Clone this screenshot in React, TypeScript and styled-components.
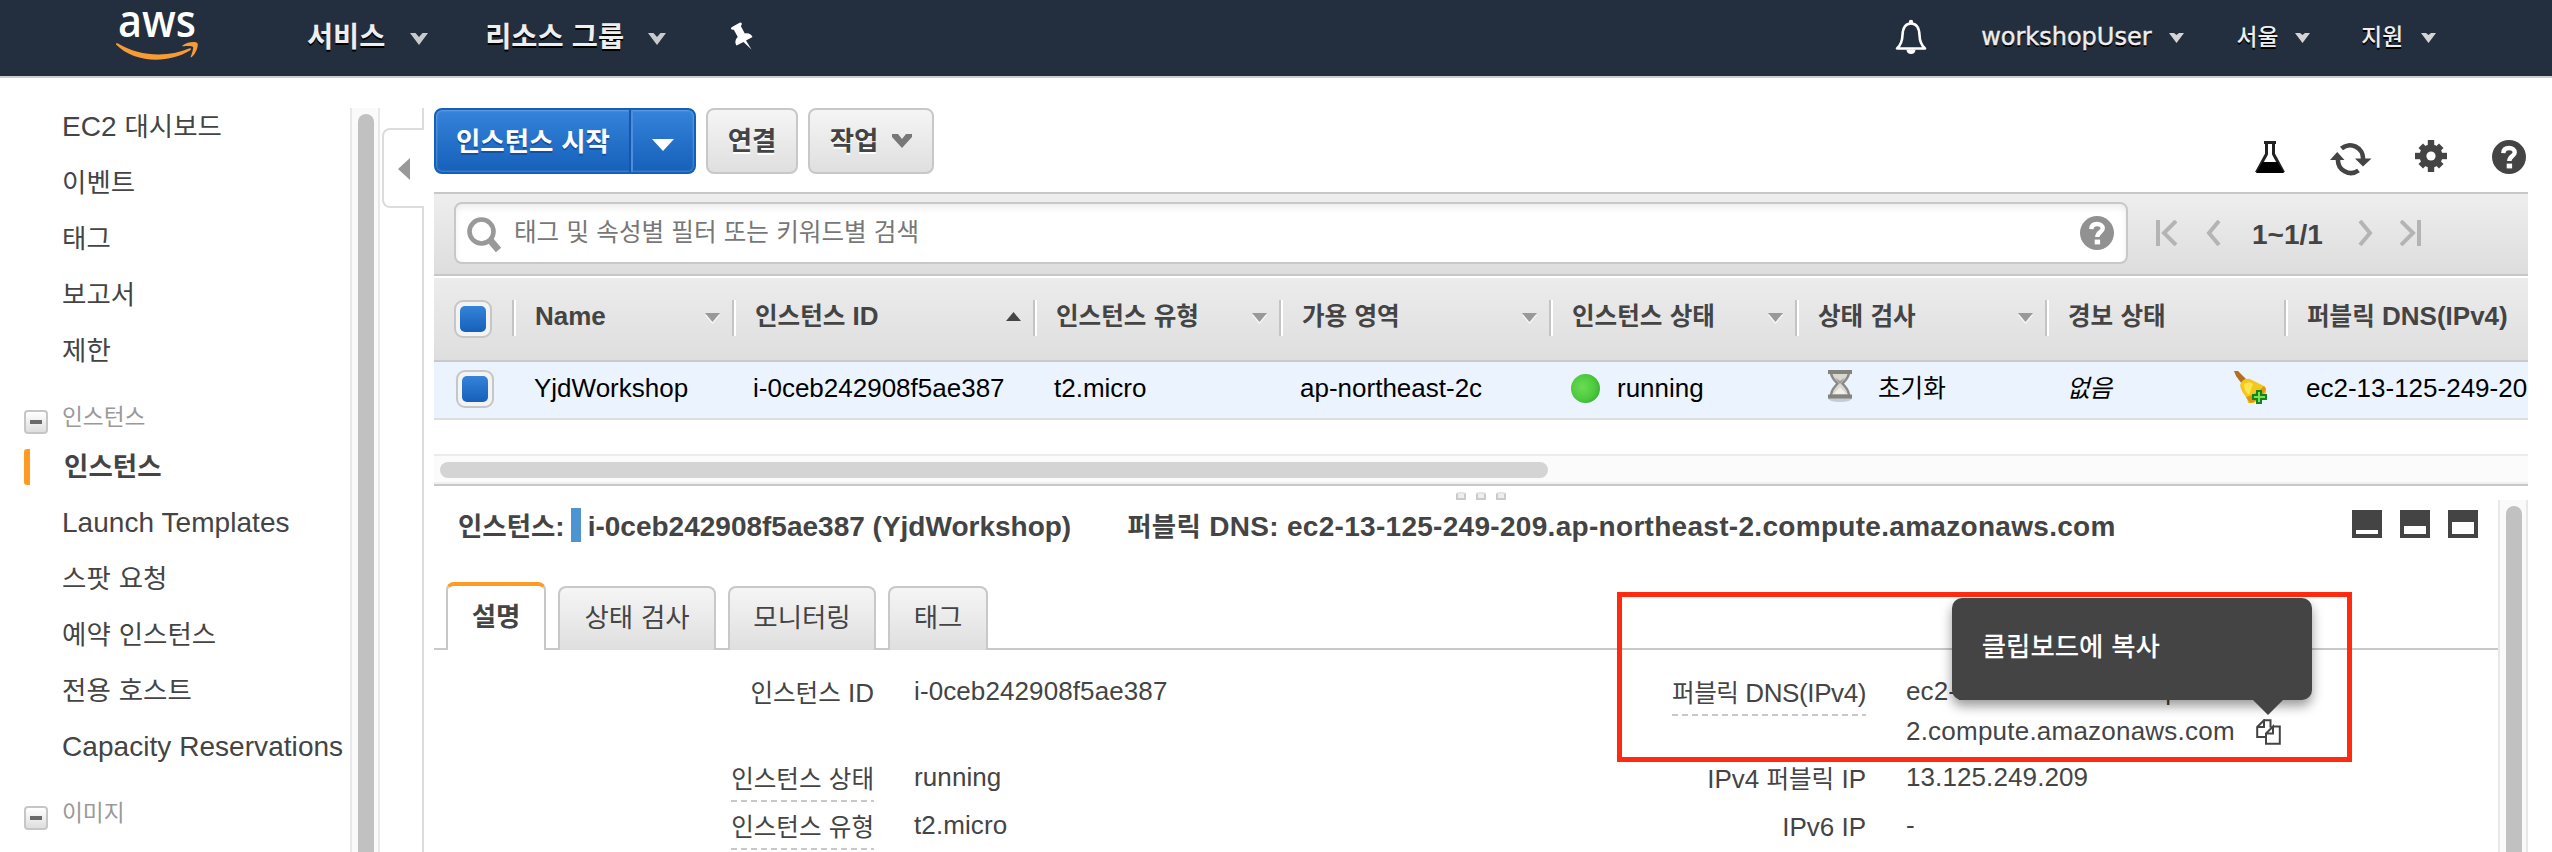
import React from 'react';
import styled, { createGlobalStyle, css } from 'styled-components';

const GlobalStyle = createGlobalStyle`
  *, *::before, *::after { box-sizing: border-box; }
  body {
    margin: 0;
    background: #fff;
    font-family: 'Liberation Sans', 'Noto Sans CJK KR', sans-serif;
    color: #444;
  }
`;

/* Hangul runs are set slightly smaller than the latin text beside them. */
const Hangul = styled.span`
  font-family: 'Noto Sans CJK KR', sans-serif;
  font-size: 0.945em;
  line-height: 0;
`;

const T = ({ children }: { children: string }) => (
  <>
    {children.split(/([\uac00-\ud7a3]+)/).map((part, i) =>
      i % 2 ? <Hangul key={i}>{part}</Hangul> : part
    )}
  </>
);

const Page = styled.div`
  width: 2552px;
  height: 852px;
  overflow: hidden;
  display: flex;
  flex-direction: column;
  background: #fff;
`;

/* ---------- top navigation ---------- */

const TopNav = styled.header`
  flex: none;
  height: 78px;
  display: flex;
  align-items: flex-start;
  background: #232f3e;
  border-bottom: 2px solid #cccdd1;
`;

const Logo = styled.svg`
  flex: none;
  width: 90px;
  height: 74px;
  margin-left: 114px;
  overflow: visible;
`;

const NavItem = styled.div<{ $left: number; $small?: boolean; $gap: number }>`
  display: flex;
  align-items: center;
  gap: ${p => p.$gap}px;
  height: 74px;
  margin-left: ${p => p.$left}px;
  white-space: nowrap;
  color: #eee;
  font-size: ${p => (p.$small ? 24 : 30)}px;
  font-weight: ${p => (p.$small ? 500 : 700)};
  text-shadow: 0 2px 0 #000;
`;

const Latin = styled.span`
  font-family: 'DejaVu Sans', sans-serif;
  font-weight: 400;
  -webkit-text-stroke: 0.4px #eee;
`;

const Icon = styled.svg<{ $left?: number; $top?: number }>`
  flex: none;
  display: block;
  margin-left: ${p => p.$left ?? 0}px;
  margin-top: ${p => p.$top ?? 0}px;
`;

const NavSpacer = styled.div`
  flex: 1;
`;

const NavChevron = ({ small }: { small?: boolean }) => (
  <Icon width={small ? 15 : 18} height={small ? 10 : 12} viewBox="0 0 18 12" $top={small ? 1 : 4}>
    <path
      d={small ? 'M0 0H6L9 2.500L12 0H18L9 12Z' : 'M0 0H5.500L9 4L12.500 0H18L9 12Z'}
      fill={small ? '#d4d4d4' : '#c8cacd'}
    />
  </Icon>
);

/* ---------- sidebar ---------- */

const Body = styled.div`
  flex: 1;
  min-height: 0;
  display: flex;
`;

const Sidebar = styled.nav`
  flex: none;
  width: 350px;
  padding-top: 20px;
  overflow: hidden;
`;

const SideItem = styled.div<{ $active?: boolean }>`
  display: flex;
  align-items: center;
  height: 56px;
  padding-top: 1px;
  padding-left: 62px;
  font-size: 28px;
  letter-spacing: 0.05px;
  white-space: nowrap;
  ${p =>
    p.$active &&
    css`
      padding-left: 24px;
      font-weight: 700;
      &::before {
        content: '';
        width: 6px;
        height: 36px;
        margin-right: 34px;
        border-radius: 3px 0 0 3px;
        background: #ff9a22;
      }
    `}
`;

const SideGroup = styled.div`
  display: flex;
  height: 60px;
  padding-left: 24px;
  color: #999;
  font-size: 24px;
  line-height: 77px;
`;

const Toggle = styled.span`
  display: flex;
  align-items: center;
  justify-content: center;
  width: 24px;
  height: 24px;
  margin: 32px 14px 0 0;
  border: 2px solid #c6c6c6;
  border-radius: 4px;
  background: linear-gradient(#fff, #dedede);
  &::before {
    content: '';
    width: 12px;
    height: 4px;
    background: #6a6a6a;
  }
`;

const VScroll = styled.div<{ $top?: number }>`
  flex: none;
  width: 30px;
  margin-top: ${p => p.$top ?? 0}px;
  padding: 6px 6px 0 6px;
  border: solid #e8e8e8;
  border-width: 0 2px;
  background: #fafafa;
`;

const VThumb = styled.div`
  width: 16px;
  height: 100%;
  border-radius: 8px 8px 0 0;
  background: #c1c1c1;
`;

const Gutter = styled.div`
  flex: none;
  width: 44px;
  margin-top: 30px;
  display: flex;
  flex-direction: column;
`;

const GutterLine = styled.div<{ $height?: number }>`
  ${p => (p.$height ? `height: ${p.$height}px;` : 'flex: 1;')}
  border-right: 2px solid #dcdcdc;
`;

const Handle = styled.div`
  display: flex;
  align-items: center;
  height: 80px;
  margin-left: 2px;
  padding: 2px 0 0 14px;
  border: 2px solid #dcdcdc;
  border-right: 0;
  border-radius: 8px 0 0 8px;
`;

/* ---------- content ---------- */

const Content = styled.main`
  flex: none;
  width: 2094px;
  margin-left: 10px;
  display: flex;
  flex-direction: column;
`;

const Toolbar = styled.div`
  flex: none;
  display: flex;
  align-items: flex-start;
  height: 114px;
  padding-top: 30px;
`;

const Button = styled.button<{ $width: number }>`
  display: flex;
  align-items: center;
  justify-content: center;
  gap: 14px;
  width: ${p => p.$width}px;
  height: 66px;
  margin: 0 10px 0 0;
  padding: 0;
  border: 2px solid #c8c8c8;
  border-radius: 8px;
  background: linear-gradient(#f5f5f5, #dfdfdf);
  color: #444;
  font: 700 28px 'Liberation Sans', sans-serif;
  text-shadow: 0 2px 0 #fff;
`;

const SplitButton = styled.div`
  display: flex;
  width: 262px;
  height: 66px;
  margin-right: 10px;
  border: 2px solid #1360b8;
  border-radius: 8px;
  background: linear-gradient(#3583da, #1660b9);
  box-shadow: inset 0 0 2px 1px rgba(255, 255, 255, 0.25);
  color: #fff;
  font-size: 28px;
  font-weight: 700;
  line-height: 64px;
  text-shadow: 0 2px 0 #1450a0;
`;

const SplitLabel = styled.div`
  width: 195px;
  height: 62px;
  padding-left: 20px;
  border-right: 2px solid #1458ab;
  box-shadow: 2px 0 0 #4a8fdc;
  white-space: nowrap;
`;

const SplitArrow = styled.div`
  flex: 1;
  display: flex;
  align-items: center;
  justify-content: center;
  padding-top: 8px;
`;

const FilterBar = styled.div`
  flex: none;
  display: flex;
  height: 84px;
  padding: 8px 0 0 20px;
  border: solid #c8c8c8;
  border-width: 2px 0;
  background: linear-gradient(#eeeeee, #dddddd);
`;

const SearchBox = styled.div`
  display: flex;
  align-items: center;
  width: 1674px;
  height: 62px;
  padding: 0 12px 0 11px;
  border: 2px solid #c8c8c8;
  border-radius: 8px;
  background: #fff;
  box-shadow: inset 0 4px 6px #eee;
  color: #777;
  font-size: 26px;
`;

const Placeholder = styled.span`
  flex: 1;
  padding: 0 0 1px 11px;
`;

const PageCount = styled.span`
  margin: 18px 0 0 31px;
  width: 106px;
  color: #444;
  font-size: 28px;
  font-weight: 700;
  line-height: 30px;
`;

const columns = '78px 220px 301px 246px 270px 246px 250px 239px 244px';

const HeadRow = styled.div`
  flex: none;
  display: grid;
  grid-template-columns: ${columns};
  height: 84px;
  margin-top: 2px;
  padding-top: 22px;
  border-bottom: 2px solid #c9c9c9;
  background: linear-gradient(#ececec, #dedede);
`;

const HeadCell = styled.div`
  display: flex;
  align-items: center;
  justify-content: space-between;
  height: 36px;
  padding: 0 12px 3px 21px;
  border-left: 2px solid #c4c4c4;
  box-shadow: inset 2px 0 0 #fff;
  font-size: 26px;
  font-weight: 700;
  white-space: nowrap;
`;

const DataRow = styled.div`
  flex: none;
  display: grid;
  grid-template-columns: ${columns};
  height: 58px;
  border-bottom: 2px solid #dcdedf;
  background: #eaf3fe;
  color: #000;
`;

const Cell = styled.div<{ $italic?: boolean; $left?: number }>`
  display: flex;
  overflow: hidden;
  padding-left: ${p => p.$left ?? 21}px;
  font-size: 26px;
  line-height: 53px;
  font-style: ${p => (p.$italic ? 'italic' : 'normal')};
  white-space: nowrap;
`;

const Check = styled.span<{ $row?: boolean }>`
  display: flex;
  align-items: center;
  justify-content: center;
  width: 38px;
  height: 38px;
  margin: ${p => (p.$row ? '8px 0 0 22px' : '0 0 0 20px')};
  border: 2px solid #c6c6c6;
  border-radius: 9px;
  background: #f3f3f3;
  &::before {
    content: '';
    width: 26px;
    height: 26px;
    border-radius: 5px;
    background: linear-gradient(#3583da, #1660b9);
  }
`;

const StatusDot = styled.span`
  width: 29px;
  height: 29px;
  margin: 12px 17px 0 1px;
  border-radius: 50%;
  background: radial-gradient(circle at 40% 45%, #6bdc55 0%, #4ecb3e 50%, #26a32a 100%);
`;

const HScroll = styled.div`
  flex: none;
  height: 32px;
  margin-top: 34px;
  padding: 6px 0 0 6px;
  border: solid;
  border-width: 2px 0;
  border-color: #ececec transparent #c8c8c8;
  background: #fbfbfb;
  box-shadow: inset 0 -2px 0 #f0f0f0;
`;

const HThumb = styled.div`
  width: 1108px;
  height: 16px;
  border-radius: 8px;
  background: #d4d4d4;
`;

/* ---------- details pane ---------- */

const Splitter = styled.div`
  flex: none;
  display: flex;
  justify-content: center;
  gap: 10px;
  height: 14px;
  padding-top: 6px;
`;

const Dot = styled.i`
  width: 10px;
  height: 8px;
  border: 2px solid #cacaca;
  border-top-color: #e4e4e4;
  border-radius: 3px 3px 1px 1px;
  background: #eee;
`;

const Pane = styled.section`
  flex: 1;
  min-height: 0;
  display: flex;
`;

const Details = styled.div`
  position: relative;
  flex: 1;
`;

const TitleRow = styled.div`
  display: flex;
  height: 82px;
  padding-left: 24px;
  font-size: 28px;
  font-weight: 700;
  line-height: 53px;
  white-space: nowrap;
`;

const ColorBar = styled.span`
  width: 10px;
  height: 34px;
  margin: 8px 7px 0 6px;
  background: #4f94d2;
`;

const TitleDns = styled.span`
  margin-left: 56px;
  letter-spacing: 0.3px;
`;

const WindowIcons = styled.div`
  display: flex;
  gap: 18px;
  margin: 10px 20px 0 auto;
`;

const WindowIcon = styled.span<{ $open: number }>`
  display: flex;
  align-items: flex-end;
  width: 30px;
  height: 28px;
  padding: 4px;
  background: #444;
  &::before {
    content: '';
    flex: 1;
    height: ${p => p.$open}px;
    background: #fff;
  }
`;

const Tabs = styled.div`
  display: flex;
  align-items: flex-end;
  gap: 12px;
  height: 68px;
  padding-left: 12px;
  box-shadow: inset 0 -2px 0 #c8c8c8;
`;

const Tab = styled.div<{ $width: number; $active?: boolean }>`
  width: ${p => p.$width}px;
  height: 64px;
  border: 2px solid #c8c8c8;
  border-bottom: 0;
  border-radius: 8px 8px 0 0;
  background: linear-gradient(#f5f5f5, #dfdfdf);
  font-size: 28px;
  line-height: 60px;
  text-align: center;
  white-space: nowrap;
  ${p =>
    p.$active &&
    css`
      height: 68px;
      border-top: 4px solid #ff9a22;
      background: #fff;
      font-weight: 700;
      line-height: 62px;
    `}
`;

const Fields = styled.div`
  display: grid;
  grid-template-columns: 440px 400px 512px 460px;
  grid-template-rows: 86px 48px 48px;
  column-gap: 40px;
  padding-top: 21px;
  font-size: 26px;
  line-height: 40px;
  white-space: nowrap;
`;

const Label = styled.div<{ $dashed?: boolean; $tight?: boolean }>`
  justify-self: end;
  align-self: start;
  margin-top: 2px;
  padding-bottom: 1px;
  letter-spacing: ${p => (p.$tight ? '-0.4px' : '0')};
  ${p =>
    p.$dashed &&
    css`
      padding-bottom: 3px;
      background: repeating-linear-gradient(90deg, #c8c8c8 0 6px, transparent 6px 10px) bottom / 100% 2px
        no-repeat;
    `}
`;

const Value = styled.div`
  letter-spacing: 0.1px;
`;

const HostTail = styled.span`
  letter-spacing: 0.22px;
`;

const CopyAnchor = styled.span`
  position: relative;
  display: inline-block;
  margin-left: 21px;
  vertical-align: -5px;
  line-height: 0;
`;

const Tooltip = styled.div`
  position: absolute;
  right: -31px;
  bottom: 45px;
  width: 360px;
  height: 102px;
  padding-left: 30px;
  border-radius: 10px;
  background: #444;
  box-shadow: 0 6px 12px rgba(0, 0, 0, 0.4);
  color: #fff;
  font-size: 28px;
  font-weight: 500;
  letter-spacing: 0;
  line-height: 98px;
  &::after {
    content: '';
    position: absolute;
    right: 28px;
    top: 101px;
    border: solid transparent;
    border-width: 16px 16px 0;
    border-top-color: #444;
  }
`;

const Highlight = styled.div`
  position: absolute;
  left: 1183px;
  top: 92px;
  width: 735px;
  height: 170px;
  border: 5px solid #ff2a10;
`;

/* ---------- icons ---------- */

const HelpIcon = ({ color, top }: { color: string; top?: number }) => (
  <Icon width="34" height="34" viewBox="0 0 34 34" $top={top}>
    <circle cx="17" cy="17" r="17" fill={color} />
    <path
      d="M11.3 13.2C11.5 9.6 13.8 8 17 8C20.4 8 22.7 9.9 22.7 12.5C22.7 16 17.3 16.2 17.3 21"
      fill="none"
      stroke="#fff"
      strokeWidth="4.4"
    />
    <rect x="14.7" y="23.6" width="5.4" height="4.8" fill="#fff" />
  </Icon>
);

const SortArrow = ({ up }: { up?: boolean }) => (
  <Icon width="15" height="11" viewBox="0 0 15 11" $top={up ? 1 : 3}>
    {up ? (
      <path d="M0 9L7.5 0L15 9Z" fill="#444" />
    ) : (
      <>
        <path d="M0 2H15L7.5 11Z" fill="#f8f8f8" />
        <path d="M0 0H15L7.5 9Z" fill="#999" />
      </>
    )}
  </Icon>
);

const heads: { label: string; sort?: 'up' | 'down' }[] = [
  { label: 'Name', sort: 'down' },
  { label: '인스턴스 ID', sort: 'up' },
  { label: '인스턴스 유형', sort: 'down' },
  { label: '가용 영역', sort: 'down' },
  { label: '인스턴스 상태', sort: 'down' },
  { label: '상태 검사', sort: 'down' },
  { label: '경보 상태' },
  { label: '퍼블릭 DNS(IPv4)' },
];

const Pager = ({ d, w, left }: { d: string; w: number; left: number }) => (
  <Icon width={w} height="26" viewBox={`0 0 ${w} 26`} $left={left} $top={18}>
    <path d={d} fill="none" stroke="#b4b4b4" strokeWidth="4" />
  </Icon>
);

export default function App() {
  return (
    <Page>
      <GlobalStyle />
      <TopNav>
        <Logo viewBox="0 -4 90 74">
          <text
            x="4"
            y="32.500"
            textLength="78"
            lengthAdjust="spacingAndGlyphs"
            fontFamily="Open Sans, sans-serif"
            fontWeight="600"
            fontSize="46"
            fill="#fff"
          >
            aws
          </text>
          <path
            d="M2 40.500C1.500 39.500 3 38.800 4 39.500C25 52.500 54 53.500 75 44.500C77 43.800 78 45 76 46.500C54 60 20 59 2 40.500Z"
            fill="#f79b34"
          />
          <path
            d="M68.500 41.500C73 38 81 37.300 83.300 39C85 41 82 50 77.500 53.200C76.800 53.500 76.500 53 76.800 52.300C78 49.500 79.500 44.500 79 43C78 41.500 72 42 69 42.300C68 42.300 68 41.900 68.500 41.500Z"
            fill="#f79b34"
          />
        </Logo>
        <NavItem $left={103} $gap={25}>
          <span><T>서비스</T></span>
          <NavChevron />
        </NavItem>
        <NavItem $left={57} $gap={24}>
          <span><T>리소스 그룹</T></span>
          <NavChevron />
        </NavItem>
        <Icon width="26" height="28" viewBox="0 0 26 28" $left={63} $top={22}>
          <path
            d="M3 5L11 0.500C12.500 0 13.500 2 12.500 3L11.800 4L15.800 11.500C19 10.500 22.500 12 23.500 15L17 18.500L22.500 27.500L14.500 20L7.500 23.500C5.500 20.500 6.500 17 8.800 15L4.800 7.800L3.500 7.800C1.500 7.500 1.500 5.800 3 5Z"
            fill="#fff"
          />
        </Icon>
        <NavSpacer />
        <Icon width="34" height="36" viewBox="0 0 34 36" $top={19}>
          <path
            d="M17 4.500C10.500 4.500 8.800 10 8.500 16C8.300 22.500 6.500 26.500 3 29.500H31C27.500 26.500 25.700 22.500 25.500 16C25.200 10 23.500 4.500 17 4.500Z"
            fill="none"
            stroke="#fff"
            strokeWidth="2.600"
            strokeLinejoin="round"
          />
          <circle cx="17" cy="3" r="2.200" fill="#fff" />
          <path d="M12.500 30.500H21.500C21.500 33.500 19.500 35 17 35C14.500 35 12.500 33.500 12.500 30.500Z" fill="#fff" />
        </Icon>
        <NavItem $left={53} $gap={17} $small>
          <Latin>workshopUser</Latin>
          <NavChevron small />
        </NavItem>
        <NavItem $left={53} $gap={17} $small>
          <span><T>서울</T></span>
          <NavChevron small />
        </NavItem>
        <NavItem $left={51} $gap={18} $small>
          <span><T>지원</T></span>
          <NavChevron small />
        </NavItem>
        <Icon width="116" height="1" />
      </TopNav>

      <Body>
        <Sidebar>
          {['EC2 대시보드', '이벤트', '태그', '보고서', '제한'].map(s => (
            <SideItem key={s}><span><T>{s}</T></span></SideItem>
          ))}
          <SideGroup><Toggle /><span><T>인스턴스</T></span></SideGroup>
          <SideItem $active><span><T>인스턴스</T></span></SideItem>
          {['Launch Templates', '스팟 요청', '예약 인스턴스', '전용 호스트', 'Capacity Reservations'].map(s => (
            <SideItem key={s}><span><T>{s}</T></span></SideItem>
          ))}
          <SideGroup><Toggle /><span><T>이미지</T></span></SideGroup>
          <SideItem>AMI</SideItem>
        </Sidebar>
        <VScroll $top={30}><VThumb /></VScroll>
        <Gutter>
          <GutterLine $height={20} />
          <Handle>
            <Icon width="12" height="22" viewBox="0 0 12 22"><path d="M12 0V22L0 11Z" fill="#999" /></Icon>
          </Handle>
          <GutterLine />
        </Gutter>

        <Content>
          <Toolbar>
            <SplitButton>
              <SplitLabel><T>인스턴스 시작</T></SplitLabel>
              <SplitArrow>
                <Icon width="22" height="12" viewBox="0 0 22 12"><path d="M0 0H22L11 12Z" fill="#fff" /></Icon>
              </SplitArrow>
            </SplitButton>
            <Button $width={92}><span><T>연결</T></span></Button>
            <Button $width={126}>
              <span><T>작업</T></span>
              <Icon width="20" height="14" viewBox="0 0 20 14" $top={-1}>
                <path d="M0 0H6L10 5L14 0H20V3L10 14L0 3Z" fill="#777" />
              </Icon>
            </Button>
            <NavSpacer />
            <Icon width="30" height="33" viewBox="0 0 30 33" $top={33}>
              <path d="M9 1.500H21M11.500 2V13L2.500 29.500H27.500L18.500 13V2" fill="none" stroke="#222" strokeWidth="3" />
              <path d="M7.500 21H22.500L29 32H1Z" fill="#000" />
            </Icon>
            <Icon width="42" height="33" viewBox="0 0 42 33" $left={45} $top={35}>
              <path d="M11.500 5.500A13 13 0 0 1 33 16M8 16A13 13 0 0 0 28.500 27.500" fill="none" stroke="#444" strokeWidth="4.600" />
              <path d="M25 15.500H41.500L33 23.500ZM0 17L7.200 9L14.500 17Z" fill="#444" />
            </Icon>
            <Icon width="32" height="32" viewBox="-16 -16 32 32" $left={43} $top={32}>
              {[0, 45, 90, 135].map(a => (
                <rect key={a} x="-3.200" y={a % 90 ? -14.5 : -16} width="6.400" height={a % 90 ? 29 : 32} fill="#444" transform={`rotate(${a})`} />
              ))}
              <circle r="8" fill="none" stroke="#444" strokeWidth="7" />
              <circle r="4.600" fill="#fff" />
            </Icon>
            <Icon width="45" height="1" />
            <HelpIcon color="#444" top={32} />
            <Icon width="2" height="1" />
          </Toolbar>

          <FilterBar>
            <SearchBox>
              <Icon width="36" height="37" viewBox="0 0 36 37" $top={4}>
                <circle cx="14.500" cy="14.500" r="12" fill="none" stroke="#999" strokeWidth="4.600" />
                <path d="M23 23L31.500 33" stroke="#999" strokeWidth="7" />
              </Icon>
              <Placeholder><T>태그 및 속성별 필터 또는 키워드별 검색</T></Placeholder>
              <HelpIcon color="#919191" />
            </SearchBox>
            <Pager d="M2 0V26M20 1L8 13L20 25" w={22} left={28} />
            <Pager d="M13 1L3 13L13 25" w={15} left={28} />
            <PageCount>1~1/1</PageCount>
            <Pager d="M2 1L12 13L2 25" w={15} left={0} />
            <Pager d="M1 1L13 13L1 25M19 0V26" w={22} left={27} />
          </FilterBar>

          <HeadRow>
            <Check />
            {heads.map(h => (
              <HeadCell key={h.label}>
                <span><T>{h.label}</T></span>
                {h.sort && <SortArrow up={h.sort === 'up'} />}
              </HeadCell>
            ))}
          </HeadRow>
          <DataRow>
            <Check $row />
            <Cell $left={22}>YjdWorkshop</Cell>
            <Cell>i-0ceb242908f5ae387</Cell>
            <Cell>t2.micro</Cell>
            <Cell>ap-northeast-2c</Cell>
            <Cell><StatusDot />running</Cell>
            <Cell $left={31}>
              <Icon width="28" height="34" viewBox="0 0 28 34" $top={7}>
                <ellipse cx="14" cy="29.500" rx="12" ry="3.500" fill="#c3cbd6" />
                <path d="M5 3H23C23 9 19 11.500 16.500 14.500C19 18 23 20 23 27H5C5 20 9 18 11.500 14.500C9 11.500 5 9 5 3Z" fill="#d9d7d2" stroke="#8b8983" strokeWidth="2.400" />
                <path d="M9 8.500L14 12L19 8.500L14 15Z" fill="#9a9892" />
                <path d="M8 25C10 21 12 21 14 18C16 21 18 21 20 25Z" fill="#f0efec" />
                <rect x="2" y="1" width="24" height="4" fill="#84827c" />
                <rect x="2" y="25.500" width="24" height="4" fill="#84827c" />
              </Icon>
              <Icon width="24" height="1" />
              <span><T>초기화</T></span>
            </Cell>
            <Cell $italic $left={22}>
              <span><T>없음</T></span>
              <NavSpacer />
              <Icon width="33" height="33" viewBox="0 0 33 33" $top={9}>
                <path d="M0 0H4L12 8L8 13L2 5Z" fill="#b0701c" />
                <path d="M6 14C8 9 11 7 16 8L30 15C33 17 32 20 32 22L20 32H14C14 26 7 22 6 14Z" fill="#f5c61e" />
                <path d="M10 14C12 11 16 11 19 13L15 24C12 21 10 19 10 14Z" fill="#ffe54c" />
                <path d="M12 26C18 25 25 20 30 15L32 18C29 25 22 31 16 32Z" fill="#d99a18" />
                <path d="M22 19H28V23H33V29H28V33H22V29H18V23H22Z" fill="#12861c" />
                <path d="M24 21H26V25H31V27H26V31H24V27H20V25H24Z" fill="#7be05a" />
              </Icon>
              <Icon width="17" height="1" />
            </Cell>
            <Cell $left={22}>ec2-13-125-249-209.ap-northeast-2</Cell>
          </DataRow>
          <HScroll><HThumb /></HScroll>

          <Splitter><Dot /><Dot /><Dot /></Splitter>
          <Pane>
            <Details>
              <TitleRow>
                <span><T>인스턴스:</T></span>
                <ColorBar />
                <span>i-0ceb242908f5ae387 (YjdWorkshop)</span>
                <TitleDns><T>퍼블릭 DNS: ec2-13-125-249-209.ap-northeast-2.compute.amazonaws.com</T></TitleDns>
                <WindowIcons>
                  <WindowIcon $open={4} />
                  <WindowIcon $open={8} />
                  <WindowIcon $open={12} />
                </WindowIcons>
              </TitleRow>
              <Tabs>
                <Tab $width={100} $active><T>설명</T></Tab>
                <Tab $width={158}><T>상태 검사</T></Tab>
                <Tab $width={148}><T>모니터링</T></Tab>
                <Tab $width={100}><T>태그</T></Tab>
              </Tabs>
              <Fields>
                <Label><T>인스턴스 ID</T></Label>
                <Value>i-0ceb242908f5ae387</Value>
                <Label $dashed $tight><T>퍼블릭 DNS(IPv4)</T></Label>
                <Value>
                  ec2-13-125-249-209.ap-northeast-
                  <br />
                  <HostTail>2.compute.amazonaws.com</HostTail>
                  <CopyAnchor>
                    <Icon width="25" height="26" viewBox="0 0 25 26">
                      <path
                        d="M8 1.200H14.500V8.500M10 18H1.200V8L8 1.200V8H1.200M17 7.500H23.800V24.800H10V14.500L17 7.500V14.500H10"
                        fill="none"
                        stroke="#444"
                        strokeWidth="2"
                      />
                    </Icon>
                    <Tooltip><T>클립보드에 복사</T></Tooltip>
                  </CopyAnchor>
                </Value>
                <Label $dashed><T>인스턴스 상태</T></Label>
                <Value>running</Value>
                <Label><T>IPv4 퍼블릭 IP</T></Label>
                <Value>13.125.249.209</Value>
                <Label $dashed><T>인스턴스 유형</T></Label>
                <Value>t2.micro</Value>
                <Label>IPv6 IP</Label>
                <Value>-</Value>
              </Fields>
              <Highlight />
            </Details>
            <VScroll><VThumb /></VScroll>
          </Pane>
        </Content>
      </Body>
    </Page>
  );
}
